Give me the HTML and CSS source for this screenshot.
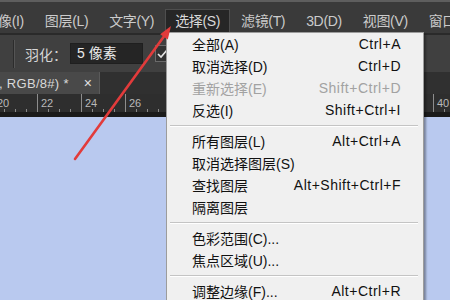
FILE: index.html
```html
<!DOCTYPE html>
<html lang="zh">
<head>
<meta charset="utf-8">
<title>选择菜单</title>
<link rel="stylesheet" href="styles.css">
</head>
<body>
<div class="app">
  <div class="menubar">
    <span class="mb first">像(I)</span>
    <span class="mb">图层(L)</span>
    <span class="mb">文字(Y)</span>
    <span class="mb active">选择(S)</span>
    <span class="mb">滤镜(T)</span>
    <span class="mb">3D(D)</span>
    <span class="mb">视图(V)</span>
    <span class="mb">窗口(W)</span>
  </div>
  <div class="options">
    <span class="vsep"></span>
    <span class="label">羽化：</span>
    <span class="input">5 像素</span>
    <span class="check">
      <svg width="11" height="10" viewBox="0 0 11 10"><path d="M1 5 L4 8 L10 1" fill="none" stroke="#e6e6e6" stroke-width="1.6"/></svg>
    </span>
  </div>
  <div class="tabs">
    <div class="tab"><span class="tabname">, RGB/8#) *</span><span class="close">×</span></div>
  </div>
  <div class="ruler">
    <span class="seg">20</span><span class="seg">22</span><span class="seg">24</span><span class="seg">26</span><span class="seg"></span><span class="seg"></span><span class="seg"></span><span class="seg"></span><span class="seg"></span><span class="seg"></span><span class="seg">40</span>
  </div>
  <div class="canvas"></div>
</div>

<div class="dropdown">
  <div class="item"><span>全部(A)</span><span class="key">Ctrl+A</span></div>
  <div class="item"><span>取消选择(D)</span><span class="key">Ctrl+D</span></div>
  <div class="item disabled"><span>重新选择(E)</span><span class="key">Shift+Ctrl+D</span></div>
  <div class="item"><span>反选(I)</span><span class="key">Shift+Ctrl+I</span></div>
  <div class="sep"></div>
  <div class="item"><span>所有图层(L)</span><span class="key">Alt+Ctrl+A</span></div>
  <div class="item"><span>取消选择图层(S)</span></div>
  <div class="item"><span>查找图层</span><span class="key">Alt+Shift+Ctrl+F</span></div>
  <div class="item"><span>隔离图层</span></div>
  <div class="sep"></div>
  <div class="item"><span>色彩范围(C)...</span></div>
  <div class="item"><span>焦点区域(U)...</span></div>
  <div class="sep"></div>
  <div class="item"><span>调整边缘(F)...</span><span class="key">Alt+Ctrl+R</span></div>
</div>

<svg class="arrow" width="450" height="300" viewBox="0 0 450 300">
  <line x1="75" y1="159" x2="165" y2="35" stroke="#e23b3b" stroke-width="2.6" stroke-linecap="round"/>
  <polygon points="171,26 167.8,39.6 160.2,34.2" fill="#e23b3b"/>
</svg>
</body>
</html>
```

FILE: styles.css
```css
* { box-sizing: border-box; margin: 0; padding: 0; }

body {
  width: 450px;
  height: 300px;
  overflow: hidden;
  position: relative;
  background: #b9c9ef;
  font-family: "Liberation Sans", "Noto Sans CJK SC", sans-serif;
}

.app {
  display: flex;
  flex-direction: column;
  height: 300px;
}

.menubar {
  height: 33px;
  flex: none;
  display: flex;
  align-items: flex-end;
  gap: 1px;
  background: #3a3a3a;
  border-top: 2px solid #5e5e5e;
  color: #cbcbcb;
  font-size: 14px;
  letter-spacing: -0.35px;
  white-space: nowrap;
  overflow: hidden;
}

.mb {
  height: 24px;
  line-height: 22px;
  padding: 0 9px;
  border: 1px solid transparent;
  border-bottom: none;
}

.mb.first { margin-left: -12px; }

.mb.active {
  background: #262626;
  border-color: #4e4e4e;
  color: #d8d8d8;
}

.options {
  height: 39px;
  flex: none;
  display: flex;
  align-items: center;
  background: #404040;
  border-top: 2px solid #2a2a2a;
  color: #d6d6d6;
  font-size: 14px;
}

.vsep {
  width: 1px;
  height: 28px;
  margin-left: 13px;
  background: #2c2c2c;
  box-shadow: 1px 0 0 #555;
}

.label { margin-left: 11px; }

.input {
  margin-left: 3px;
  width: 73px;
  height: 21px;
  line-height: 19px;
  padding-left: 6px;
  background: #252525;
  border: 1px solid #1f1f1f;
  color: #eaeaea;
}

.check {
  margin-left: 12px;
  width: 15px;
  height: 17px;
  display: flex;
  align-items: center;
  justify-content: center;
  background: #333;
  border: 1px solid #6a6a6a;
}

.tabs {
  height: 22px;
  flex: none;
  display: flex;
  background: #303030;
}

.tab {
  width: 100px;
  display: flex;
  align-items: center;
  background: #494949;
  border-right: 1px solid #5a5a5a;
  color: #d9d9d9;
  font-size: 13px;
  white-space: nowrap;
}

.tabname { margin-left: -1px; letter-spacing: 0.3px; }

.close {
  margin-left: 15px;
  font-size: 14px;
  color: #e0e0e0;
}

.ruler {
  height: 23px;
  flex: none;
  display: flex;
  background: #2e2e2e;
  border-bottom: 5px solid #1b1b1b;
  overflow: hidden;
  color: #b9b9b9;
  font-size: 11px;
  line-height: 13px;
}

.seg {
  flex: none;
  width: 44px;
  padding: 3px 0 0 3px;
  border-left: 1px solid #8d8d8d;
  background:
    repeating-linear-gradient(to right, transparent 0 10px, #8a8a8a 10px 11px) bottom / 100% 3px no-repeat;
}

.seg:first-child { margin-left: -7px; }

.canvas {
  flex: 1;
  background: #b9c9ef;
}

.dropdown {
  position: absolute;
  left: 166px;
  top: 32px;
  width: 258px;
  height: 280px;
  background: #f0f0f0;
  border: 1px solid #9c9c9c;
  box-shadow: 2px 2px 2px rgba(0, 0, 0, 0.35);
  color: #111;
  font-size: 14px;
}

.item {
  height: 22px;
  display: flex;
  align-items: center;
  justify-content: space-between;
  padding: 0 22px 0 25px;
  white-space: nowrap;
}

.key { letter-spacing: 0.5px; }

.item.disabled { color: #a2a2a2; }

.sep {
  height: 9px;
  padding: 4px 5px 0 3px;
}

.sep::before {
  content: "";
  display: block;
  height: 1px;
  background: #c4c4c4;
  box-shadow: 0 1px 0 #fff;
}

.arrow {
  position: absolute;
  left: 0;
  top: 0;
  pointer-events: none;
}
```
